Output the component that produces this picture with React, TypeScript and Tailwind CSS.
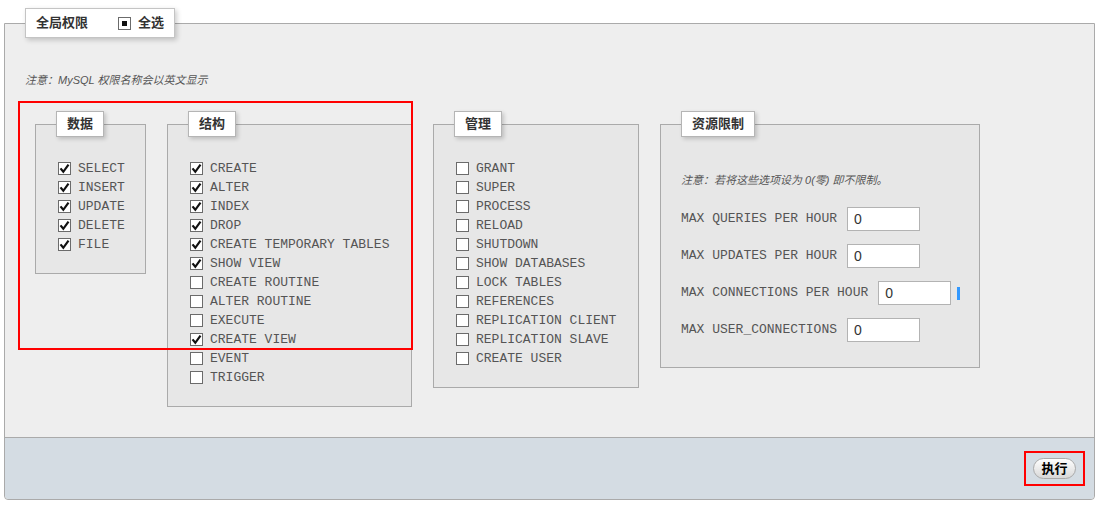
import React from "react";

const DATA = [
  { name: "SELECT", on: true },
  { name: "INSERT", on: true },
  { name: "UPDATE", on: true },
  { name: "DELETE", on: true },
  { name: "FILE", on: true },
];

const STRUCTURE = [
  { name: "CREATE", on: true },
  { name: "ALTER", on: true },
  { name: "INDEX", on: true },
  { name: "DROP", on: true },
  { name: "CREATE TEMPORARY TABLES", on: true },
  { name: "SHOW VIEW", on: true },
  { name: "CREATE ROUTINE", on: false },
  { name: "ALTER ROUTINE", on: false },
  { name: "EXECUTE", on: false },
  { name: "CREATE VIEW", on: true },
  { name: "EVENT", on: false },
  { name: "TRIGGER", on: false },
];

const ADMIN = [
  "GRANT",
  "SUPER",
  "PROCESS",
  "RELOAD",
  "SHUTDOWN",
  "SHOW DATABASES",
  "LOCK TABLES",
  "REFERENCES",
  "REPLICATION CLIENT",
  "REPLICATION SLAVE",
  "CREATE USER",
].map((name) => ({ name, on: false }));

const LIMITS = [
  { label: "MAX QUERIES PER HOUR", focus: false },
  { label: "MAX UPDATES PER HOUR", focus: false },
  { label: "MAX CONNECTIONS PER HOUR", focus: true },
  { label: "MAX USER_CONNECTIONS", focus: false },
];

const CJK = "font-['Liberation_Sans','Noto_Sans_CJK_SC',sans-serif]";

function Box({ checked, partial }: { checked?: boolean; partial?: boolean }) {
  return (
    <svg width="13" height="13" viewBox="0 0 13 13" className="shrink-0">
      <rect x="0.5" y="0.5" width="12" height="12" fill="#fff" stroke="#6b6b6b" />
      {checked && (
        <path d="M2.5 6.4 L5.3 9.8 L10.5 2.6" fill="none" stroke="#111" strokeWidth="2.2" />
      )}
      {partial && <rect x="4" y="4" width="5" height="5" fill="#111" />}
    </svg>
  );
}

function Legend({ title }: { title: string }) {
  return (
    <div
      className={`-mt-[14px] ml-[20px] w-fit border border-[#b5b5b5] bg-white px-[10px] text-[13px] leading-[24px] font-bold text-[#333] shadow-[2px_2px_4px_rgba(0,0,0,0.18)] ${CJK}`}
    >
      {title}
    </div>
  );
}

function PrivGroup({
  title,
  items,
  width,
}: {
  title: string;
  items: { name: string; on: boolean }[];
  width: string;
}) {
  return (
    <div className={`${width} border border-[#aaaaaa] bg-[#e7e7e7] pb-[19px]`}>
      <Legend title={title} />
      <ul className="mt-[22px] pl-[22px]">
        {items.map((it) => (
          <li key={it.name} className="flex h-[19px] items-center gap-[7px]">
            <Box checked={it.on} />
            <span className="font-['Liberation_Mono',monospace] text-[13px] whitespace-pre text-[#555]">
              {it.name}
            </span>
          </li>
        ))}
      </ul>
    </div>
  );
}

function LimitsGroup() {
  return (
    <div className="w-[320px] border border-[#aaaaaa] bg-[#e7e7e7] pb-[25px]">
      <Legend title="资源限制" />
      <p className={`mt-[36px] pl-[20px] text-[11px] leading-[14px] text-[#555] italic ${CJK}`}>
        注意：若将这些选项设为 0(零) 即不限制。
      </p>
      <div className="mt-[20px] flex flex-col gap-[13px] pl-[20px]">
        {LIMITS.map((l) => (
          <div key={l.label} className="flex h-[24px] items-center">
            <span className="font-['Liberation_Mono',monospace] text-[13px] whitespace-pre text-[#555]">
              {l.label}
            </span>
            <input
              readOnly
              value="0"
              className="ml-[10px] h-[24px] w-[73px] border border-[#b3b3b3] bg-white pl-[6px] font-['Liberation_Sans',sans-serif] text-[14px] text-[#333] outline-none"
            />
            {l.focus && <span className="ml-[6px] h-[13px] w-[3px] bg-[#3399ff]" />}
          </div>
        ))}
      </div>
    </div>
  );
}

export default function App() {
  return (
    <div className="h-[506px] w-[1101px] bg-white pt-[23px] pl-[4px]">
      <div className="relative w-[1091px] rounded-b-[4px] border border-[#aaaaaa] bg-[#eeeeee]">
        <div className="pl-[20px]">
          <div
            className={`-mt-[16px] flex h-[30px] w-[150px] items-center border border-[#c4c4c4] bg-white pl-[10px] text-[13px] font-bold text-[#333] shadow-[2px_2px_5px_rgba(0,0,0,0.2)] ${CJK}`}
          >
            <span>全局权限</span>
            <span className="ml-[30px] flex items-center gap-[7px]">
              <Box partial />
              <span>全选</span>
            </span>
          </div>
          <p className={`mt-[35px] text-[11px] leading-[14px] text-[#555] italic ${CJK}`}>
            注意：MySQL 权限名称会以英文显示
          </p>
          <div className="mt-[37px] ml-[10px] flex items-start gap-[21px] pb-[30px]">
            <PrivGroup title="数据" items={DATA} width="w-[111px]" />
            <PrivGroup title="结构" items={STRUCTURE} width="w-[245px]" />
            <PrivGroup title="管理" items={ADMIN} width="w-[206px]" />
            <LimitsGroup />
          </div>
        </div>

        <div className="flex h-[62px] items-center justify-end rounded-b-[4px] border-t border-[#aaaaaa] bg-[#d4dce3] pr-[9px]">
          <div className="flex h-[35px] w-[61px] items-center justify-center border-2 border-[#ff0000]">
            <button
              className={`h-[21px] w-[43px] rounded-full border border-[#aaaaaa] bg-gradient-to-b from-white to-[#d8d8d8] text-[13px] leading-none font-bold text-black ${CJK}`}
            >
              执行
            </button>
          </div>
        </div>

        {/* annotation frame over the first two groups */}
        <div className="pointer-events-none absolute top-[77px] left-[13px] h-[249px] w-[395px] border-2 border-[#ff0000]" />
      </div>
    </div>
  );
}
